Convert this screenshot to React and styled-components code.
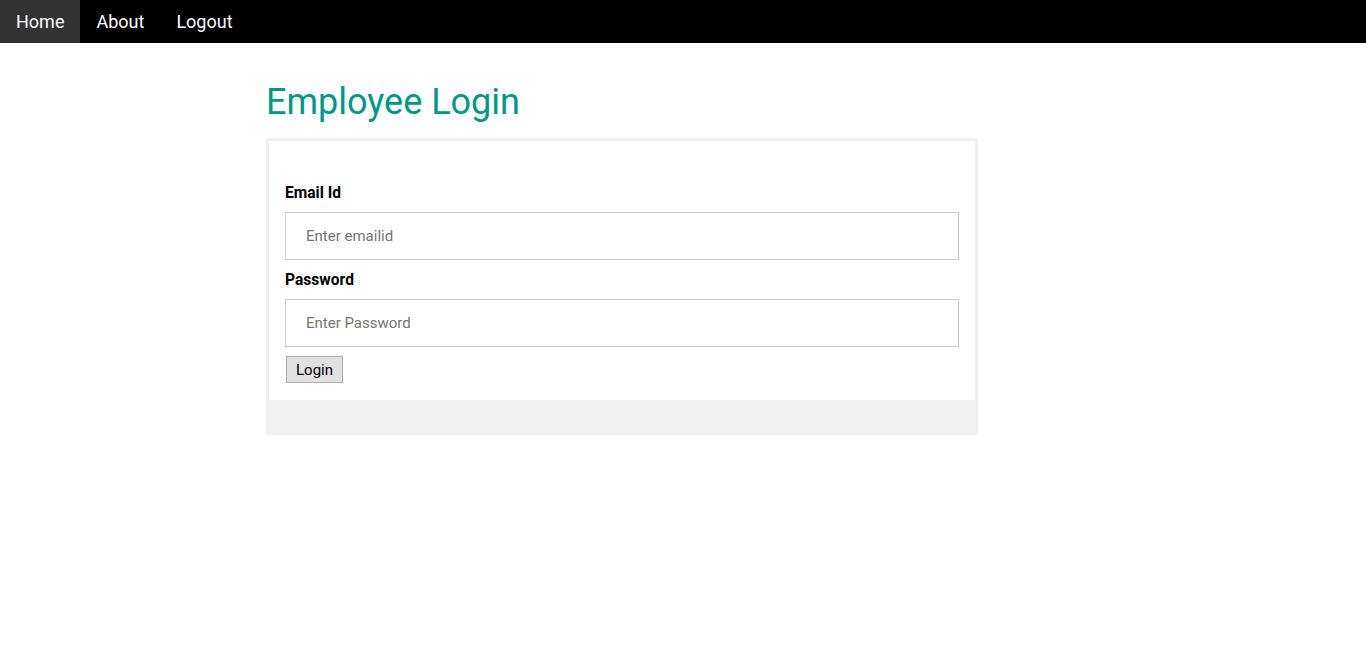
import React from "react";
import styled, { createGlobalStyle } from "styled-components";

const GlobalStyle = createGlobalStyle`
  html, body {
    margin: 0;
    padding: 0;
    background: #fff;
    font-family: Roboto, "Liberation Sans", sans-serif;
    font-size: 15px;
    color: #000;
  }
`;

const NavBar = styled.nav`
  display: flex;
  height: 43px;
  background: #000;
`;

const NavLink = styled.a`
  display: flex;
  align-items: center;
  padding: 0 16px;
  font-size: 18px;
  color: #fff;
  text-decoration: none;
  background: ${(p) => (p.active ? "#333" : "transparent")};
`;

const Container = styled.div`
  width: 712px;
  margin: 0 auto 0 266px;
`;

const Title = styled.h2`
  margin: 38px 0 14px;
  font-size: 36px;
  line-height: 43px;
  font-weight: 400;
  color: #009688;
`;

const Card = styled.div`
  background: #f1f1f1;
  padding: 3px 3px 0;
`;

const Form = styled.form`
  background: #fff;
  padding: 41px 16px 17px;
`;

const Label = styled.label`
  display: block;
  font-size: 15.6px;
  font-weight: 700;
  line-height: 22px;
  margin-bottom: 8px;
`;

const Input = styled.input`
  display: block;
  box-sizing: border-box;
  width: 100%;
  height: 48px;
  padding: 0 20px;
  margin: 0 0 9px;
  border: 1px solid #ccc;
  font-family: Roboto, "Liberation Sans", sans-serif;
  font-size: 15px;
  color: #000;
  outline: none;
  &::placeholder {
    color: #757575;
  }
`;

const Button = styled.button`
  display: block;
  margin: 0 0 0 1px;
  height: 27px;
  padding: 0 9px;
  background: #e1e1e1;
  border: 1px solid #adadad;
  font-family: Roboto, "Liberation Sans", sans-serif;
  font-size: 15px;
  color: #000;
`;

const Footer = styled.div`
  height: 35px;
`;

export default function App() {
  return (
    <>
      <GlobalStyle />
      <NavBar>
        <NavLink href="#" active>Home</NavLink>
        <NavLink href="#">About</NavLink>
        <NavLink href="#">Logout</NavLink>
      </NavBar>
      <Container>
        <Title>Employee Login</Title>
        <Card>
          <Form onSubmit={(e) => e.preventDefault()}>
            <Label htmlFor="email">Email Id</Label>
            <Input id="email" type="text" placeholder="Enter emailid" />
            <Label htmlFor="password">Password</Label>
            <Input id="password" type="password" placeholder="Enter Password" />
            <Button type="submit">Login</Button>
          </Form>
          <Footer />
        </Card>
      </Container>
    </>
  );
}
